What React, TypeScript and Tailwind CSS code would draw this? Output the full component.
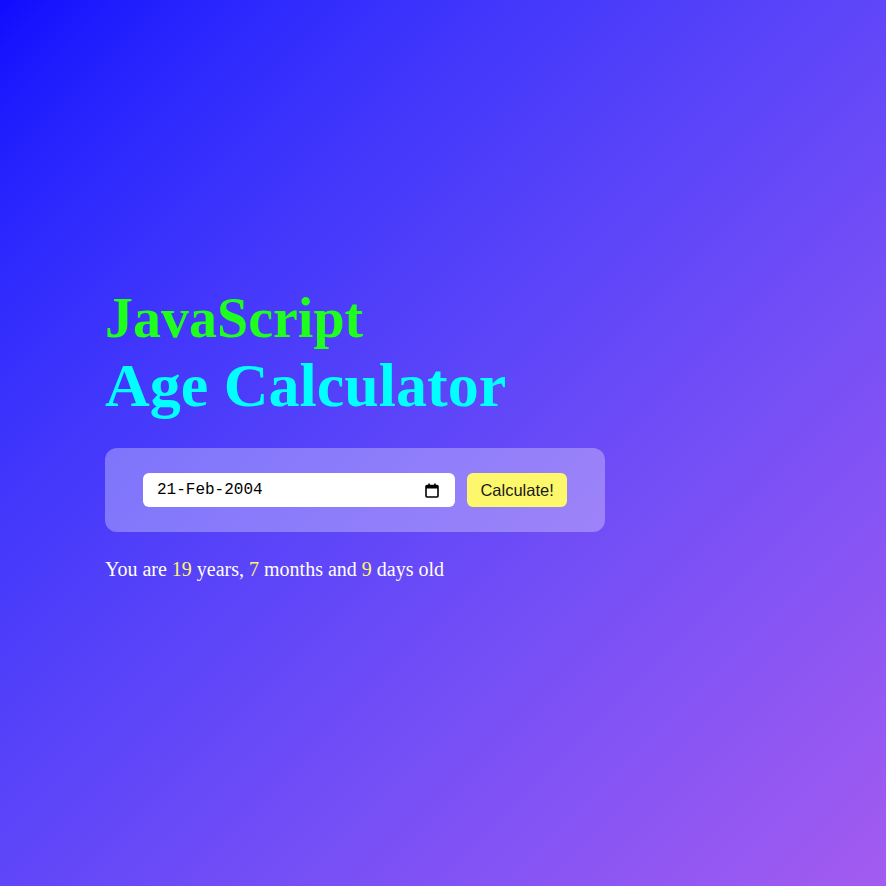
import { useState } from "react";

const CalendarIcon = () => (
  <svg width="14" height="15" viewBox="0 0 14 15" className="text-black">
    <rect x="1" y="2.5" width="12" height="11.5" rx="1" fill="none" stroke="currentColor" strokeWidth="1.6" />
    <rect x="1" y="2.5" width="12" height="3" fill="currentColor" />
    <rect x="3.3" y="0.5" width="1.6" height="3" fill="currentColor" />
    <rect x="9.1" y="0.5" width="1.6" height="3" fill="currentColor" />
  </svg>
);

const App = () => {
  const [dob] = useState<string>("21-Feb-2004");
  const age = { years: 19, months: 7, days: 9 };

  return (
    <div className="min-h-screen bg-linear-to-br from-[#100aff] to-[#a35bf0] font-['Liberation_Serif',serif]">
      <div className="pl-[105px] pt-[286px]">
        <div className="text-[56px] leading-[64px] font-bold text-[#1eff1e]">JavaScript</div>
        <div className="text-[62px] leading-[70px] font-bold text-[#00ffff]">Age Calculator</div>

        <div className="mt-[28px] w-[500px] rounded-xl bg-white/30 px-[38px] py-[25px] flex items-center gap-3">
          <div className="flex items-center justify-between w-[313px] h-[34px] bg-white rounded-md pl-[14px] pr-[16px]">
            <span className="font-['Liberation_Mono',monospace] text-[16px] text-black">{dob}</span>
            <CalendarIcon />
          </div>
          <button className="w-[100px] h-[34px] rounded-md bg-[#fdf86b] text-[16.5px] text-[#1a1a1a] font-['Liberation_Sans',sans-serif]">
            Calculate!
          </button>
        </div>

        <p className="mt-[25px] text-[20px] leading-[24px] text-white">
          You are <span className="text-[#fdf86b]">{age.years}</span> years,{" "}
          <span className="text-[#fdf86b]">{age.months}</span> months and{" "}
          <span className="text-[#fdf86b]">{age.days}</span> days old
        </p>
      </div>
    </div>
  );
};

export default App;
